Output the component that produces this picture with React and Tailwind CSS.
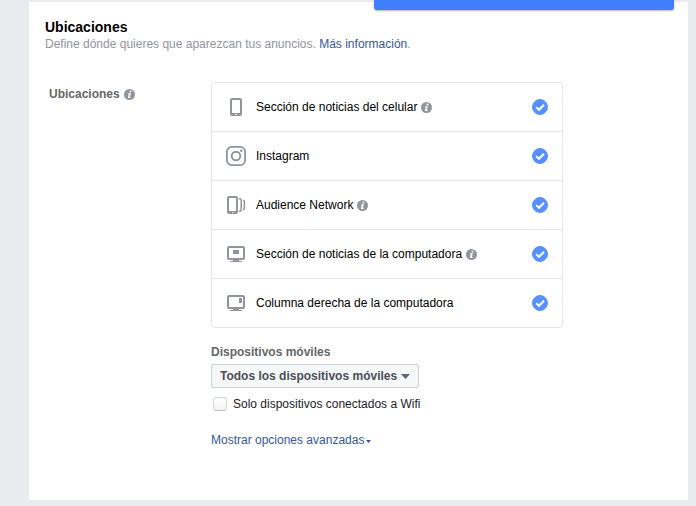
import React from 'react';

function InfoIcon() {
  return (
    <svg className="size-[11px] shrink-0" viewBox="0 0 11 11" role="img" aria-label="Información">
      <circle cx="5.5" cy="5.5" r="5.5" fill="#90949c" />
      <circle cx="6.5" cy="2.5" r="1" fill="#fff" />
      <path d="M4.300 4.200h2.500L5.900 7.900h.8l-.3 1H3.900l.9-3.700h-.8z" fill="#fff" />
    </svg>
  );
}

function PhoneIcon() {
  return (
    <svg className="size-5" viewBox="0 0 20 20" fill="#90949c" aria-hidden="true">
      <path fillRule="evenodd" d="M6 1h8a2 2 0 0 1 2 2v14a2 2 0 0 1-2 2H6a2 2 0 0 1-2-2V3a2 2 0 0 1 2-2zM6.500 3a.5.5 0 0 0-.5.500V16h8V3.500a.5.5 0 0 0-.5-.500zM9 17v1h2v-1z" />
    </svg>
  );
}

function InstagramIcon() {
  return (
    <svg className="size-5" viewBox="0 0 20 20" fill="none" stroke="#90949c" aria-hidden="true">
      <rect x="0.9" y="0.9" width="18.200" height="18.200" rx="4.800" strokeWidth="1.800" />
      <circle cx="10" cy="10" r="4.300" strokeWidth="1.900" />
      <circle cx="15.300" cy="4.700" r="1.200" fill="#90949c" stroke="none" />
    </svg>
  );
}

function NetworkIcon() {
  return (
    <svg className="size-5" viewBox="0 0 20 20" fill="#90949c" aria-hidden="true">
      <path fillRule="evenodd" d="M3 1h7a2 2 0 0 1 2 2v14a2 2 0 0 1-2 2H3a2 2 0 0 1-2-2V3a2 2 0 0 1 2-2zM3.500 3a.5.5 0 0 0-.5.500V16h7V3.500a.5.5 0 0 0-.5-.500zM6 17v1h1.500v-1z" />
      <path d="M13 3.800h.7q1.500 0 1.500 1.500v9.400q0 1.500-1.500 1.500H13M17 5.600h.3q1.100 0 1.100 1.100v6.600q0 1.100-1.100 1.100H17" fill="none" stroke="#90949c" strokeWidth="1.500" />
    </svg>
  );
}

function MonitorIcon({ side }) {
  return (
    <svg className="size-5" viewBox="0 0 20 20" fill="#90949c" aria-hidden="true">
      <path fillRule="evenodd" d="M3 2h14a2 2 0 0 1 2 2v10a2 2 0 0 1-2 2H3a2 2 0 0 1-2-2V4a2 2 0 0 1 2-2zM3.500 4a.5.5 0 0 0-.5.500v9a.5.5 0 0 0 .5.500h13a.5.5 0 0 0 .5-.500v-9a.5.5 0 0 0-.5-.500z" />
      <path d="M7 16h6v1h3v1H4v-1h3z" />
      {side ? <rect x="13" y="5" width="3" height="5" /> : <rect x="7" y="6" width="6" height="4" />}
    </svg>
  );
}

const placements = [
  { id: 'mobile-feed', label: 'Sección de noticias del celular', icon: <PhoneIcon />, info: true },
  { id: 'instagram', label: 'Instagram', icon: <InstagramIcon /> },
  { id: 'audience', label: 'Audience Network', icon: <NetworkIcon />, info: true },
  { id: 'desktop-feed', label: 'Sección de noticias de la computadora', icon: <MonitorIcon />, info: true },
  { id: 'right-column', label: 'Columna derecha de la computadora', icon: <MonitorIcon side /> },
];

function PlacementRow({ id, label, icon, info }) {
  return (
    <li className="flex h-[49px] items-center px-[14px] last:h-12">
      {icon}
      <label htmlFor={id} className="ml-[10px] text-black">{label}</label>
      {info && <span className="ml-1 flex"><InfoIcon /></span>}
      <span className="relative ml-auto size-4">
        <input id={id} type="checkbox" defaultChecked className="peer block size-4 appearance-none rounded-full border border-[#bec3c9] checked:border-[#5890ff] checked:bg-[#5890ff]" />
        <svg className="pointer-events-none absolute inset-0 hidden size-4 peer-checked:block" viewBox="0 0 16 16" fill="none" stroke="#fff" strokeWidth="2" aria-hidden="true">
          <path d="M4.300 8.200 7 10.800l5-5" />
        </svg>
      </span>
    </li>
  );
}

export default function App() {
  return (
    <div className="relative flex min-h-screen flex-col bg-[#e9ebee] pt-[2px] pr-2 pb-[6px] pl-[29px] font-['Liberation_Sans',Arial,sans-serif] text-[12px] leading-4">
      <div className="absolute top-0 right-[22px] h-[10px] w-[300px] rounded-b-[3px] bg-[#4080ff] shadow-[0_1px_2px_rgba(0,0,0,0.3)]" />
      <main className="flex-1 bg-white px-4 pt-4">
        <h1 className="text-[14px] leading-[18px] font-bold text-black">Ubicaciones</h1>
        <p className="text-[#90949c]">
          Define dónde quieres que aparezcan tus anuncios.{' '}
          <a href="#informacion" className="text-[#365899]">Más información</a>.
        </p>
        <div className="mt-[30px] flex items-start pl-1">
          <h2 className="mt-1 flex w-[162px] shrink-0 items-center gap-1 font-bold text-[#666]">
            Ubicaciones <InfoIcon />
          </h2>
          <div className="max-w-[352px] flex-1">
            <ul className="divide-y divide-[#e5e5e5] rounded border border-[#e5e5e5]">
              {placements.map((p) => <PlacementRow key={p.id} {...p} />)}
            </ul>
            <label htmlFor="devices" className="mt-4 block font-bold text-[#666]">Dispositivos móviles</label>
            <div className="relative mt-1 w-[208px]">
              <select id="devices" className="block h-6 w-full appearance-none rounded-[2px] border border-[#ced0d4] bg-[#f6f7f9] pr-5 pl-2 font-bold text-[#4b4f56]">
                <option>Todos los dispositivos móviles</option>
              </select>
              <svg className="pointer-events-none absolute top-[10px] right-[9px] h-[5px] w-[9px]" viewBox="0 0 9 5" fill="#606770" aria-hidden="true">
                <path d="M0 0h9L4.500 5z" />
              </svg>
            </div>
            <div className="mt-2 flex items-center gap-[6px] pl-[2px]">
              <input id="wifi" type="checkbox" className="size-[14px] appearance-none rounded-[3px] border border-[#d8d8d8] border-b-[#c0c0c0] bg-linear-to-b from-white to-[#f4f4f4] checked:bg-[#5890ff]" />
              <label htmlFor="wifi" className="text-[#1d2129]">Solo dispositivos conectados a Wifi</label>
            </div>
            <a href="#avanzadas" className="mt-5 flex items-center gap-[2px] text-[#365899]">
              Mostrar opciones avanzadas
              <svg className="mt-[2px] h-[3px] w-[5px]" viewBox="0 0 5 3" fill="#365899" aria-hidden="true">
                <path d="M0 0h5L2.500 3z" />
              </svg>
            </a>
          </div>
        </div>
      </main>
    </div>
  );
}
